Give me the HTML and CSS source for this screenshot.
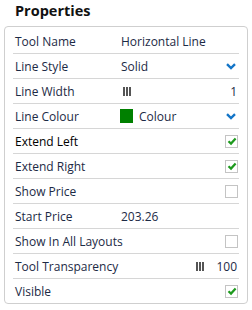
FILE: index.html
```html
<!DOCTYPE html>
<html lang="en">
<head>
  <meta charset="UTF-8" />
  <title>Properties</title>
  <link rel="stylesheet" href="styles.css">
</head>
<body>

  <h1 class="title">Properties</h1>

  <div class="panel">
    <div class="row">
      <span class="label">Tool Name</span>
      <span class="value">Horizontal Line</span>
    </div>
    <div class="row">
      <span class="label">Line Style</span>
      <span class="value">Solid</span>
      <svg class="chevron" viewBox="0 0 10 7"><path d="M1 1.2 L5 5 L9 1.2" /></svg>
    </div>
    <div class="row">
      <span class="label">Line Width</span>
      <span class="value"><span class="bars"><i></i><i></i><i></i></span></span>
      <span class="num">1</span>
    </div>
    <div class="row">
      <span class="label">Line Colour</span>
      <span class="value"><span class="swatch"></span>Colour</span>
      <svg class="chevron" viewBox="0 0 10 7"><path d="M1 1.2 L5 5 L9 1.2" /></svg>
    </div>
    <div class="row">
      <span class="label strong">Extend Left</span>
      <span class="check on"><svg viewBox="0 0 10 10"><path d="M1.5 5.2 L4 7.6 L8.6 2.4" /></svg></span>
    </div>
    <div class="row">
      <span class="label">Extend Right</span>
      <span class="check on"><svg viewBox="0 0 10 10"><path d="M1.5 5.2 L4 7.6 L8.6 2.4" /></svg></span>
    </div>
    <div class="row">
      <span class="label">Show Price</span>
      <span class="check"></span>
    </div>
    <div class="row">
      <span class="label">Start Price</span>
      <span class="value">203.26</span>
    </div>
    <div class="row">
      <span class="label">Show In All Layouts</span>
      <span class="check"></span>
    </div>
    <div class="row">
      <span class="label">Tool Transparency</span>
      <span class="bars right"><i></i><i></i><i></i></span>
      <span class="num wide">100</span>
    </div>
    <div class="row">
      <span class="label">Visible</span>
      <span class="check on"><svg viewBox="0 0 10 10"><path d="M1.5 5.2 L4 7.6 L8.6 2.4" /></svg></span>
    </div>
  </div>

</body>
</html>
```

FILE: styles.css
```css
body {
  margin: 0;
  padding: 0 4px;
  font-family: 'Open Sans', sans-serif;
  background: #ffffff;
  color: #1c2a45;
}

.title {
  margin: 0;
  padding: 1px 0 0 11px;
  height: 25px;
  font-size: 14.5px;
  font-weight: 700;
  line-height: 20px;
  color: #111;
}

.panel {
  border: 1px solid #cfcfcf;
  border-radius: 4px;
  padding: 2px 8px 0;
}

.row {
  display: flex;
  align-items: center;
  height: 24px;
  padding: 0 1px 0 2px;
  border-bottom: 1px solid #d6d6d6;
  font-size: 12px;
  white-space: nowrap;
}

.row:last-child {
  border-bottom: none;
}

.label {
  width: 106px;
  flex-shrink: 0;
}

.label.strong {
  color: #000;
}

.value {
  flex: 1;
  display: flex;
  align-items: center;
}

.chevron {
  width: 10px;
  height: 7px;
  margin-right: 2px;
}

.chevron path {
  fill: none;
  stroke: #1375c8;
  stroke-width: 2.4;
}

.bars {
  display: flex;
  gap: 1px;
  margin-left: 2px;
}

.bars i {
  width: 2px;
  height: 9px;
  background: #555;
}

.bars.right {
  margin-left: auto;
}

.num {
  margin-left: auto;
  margin-right: 1px;
}

.num.wide {
  margin-left: 12px;
}

.swatch {
  width: 13px;
  height: 14px;
  background: #008000;
  margin: 0 6px 0 -1px;
}

.check {
  margin-left: auto;
  width: 11px;
  height: 11px;
  border: 1px solid #c4c4c4;
  display: flex;
  align-items: center;
  justify-content: center;
}

.check svg {
  width: 10px;
  height: 10px;
}

.check path {
  fill: none;
  stroke: #1e9a1e;
  stroke-width: 2.2;
}
```
